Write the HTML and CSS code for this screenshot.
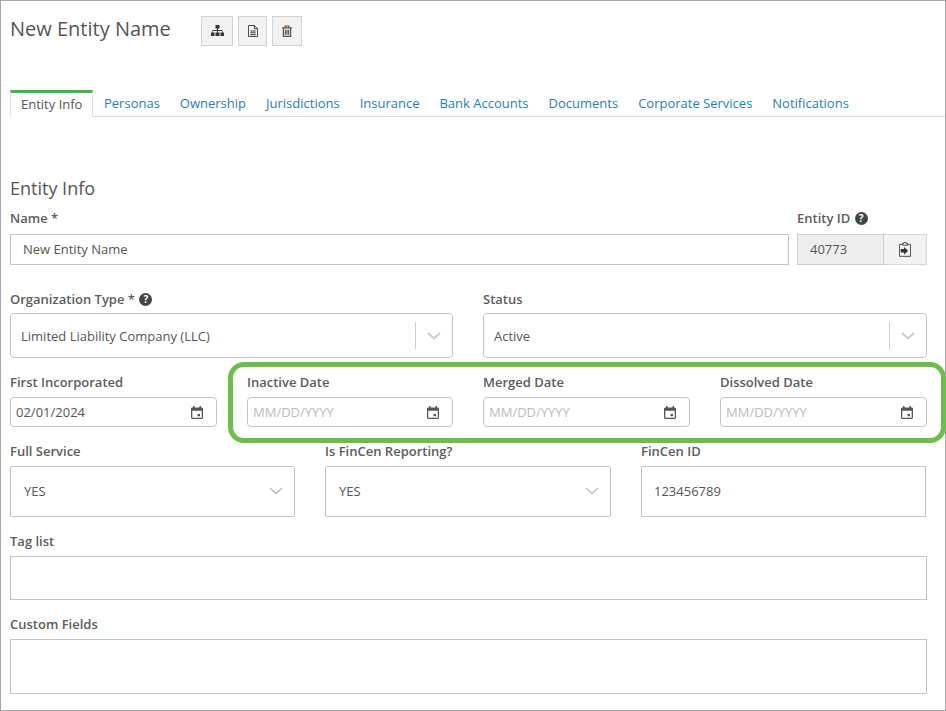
FILE: index.html
```html
<!DOCTYPE html>
<html lang="en">
<head>
    <meta charset="UTF-8">
    <title>New Entity Name</title>
    <link rel="stylesheet" href="styles.css">
</head>
<body>
    <div class="page">
        <div class="header">
            <h1>New Entity Name</h1>
            <div class="actions">
                <button class="icon-btn icon-btn-first" type="button">
                    <svg width="13" height="12" viewBox="0 0 13 12"><path fill="#333" d="M4.500 0h4v3.500H7V5h4.500v2.500H13V11H9.500V7.500H11V6H7v1.500h1.500V11h-4V7.500H6V6H2v1.500h1.500V11H0V7.500h1.500V5H6V3.500H4.500z"/></svg>
                </button>
                <button class="icon-btn icon-btn-mid" type="button">
                    <svg width="10" height="12" viewBox="0 0 11 13"><path fill="none" stroke="#333" d="M.5.500h6.500l3.500 3.500v8.500H.5zM7 .5V4h3.500"/><path stroke="#333" d="M2.500 6.500h6M2.500 8.500h6M2.500 10.500h6"/></svg>
                </button>
                <button class="icon-btn" type="button">
                    <svg width="10" height="12" viewBox="0 0 11 13"><path fill="none" stroke="#5b5048" stroke-width="1.300" d="M0 3h11M3.500 3V1h4v2M1.500 3v9.500h8V3M3.700 5v5.500M5.500 5v5.500M7.300 5v5.500"/></svg>
                </button>
            </div>
        </div>

        <ul class="tabs">
            <li class="tab active">Entity Info</li>
            <li class="tab">Personas</li>
            <li class="tab">Ownership</li>
            <li class="tab">Jurisdictions</li>
            <li class="tab">Insurance</li>
            <li class="tab">Bank Accounts</li>
            <li class="tab">Documents</li>
            <li class="tab">Corporate Services</li>
            <li class="tab">Notifications</li>
        </ul>

        <h2>Entity Info</h2>

        <div class="row row-name">
            <div class="field">
                <label class="label-wide">Name *</label>
                <div class="input input-name">New Entity Name</div>
            </div>
            <div class="field">
                <label class="label-wide">Entity ID <span class="help">?</span></label>
                <div class="id-group">
                    <div class="id-value">40773</div>
                    <div class="id-btn">
                        <svg width="12" height="15" viewBox="0 0 14 17"><path fill="none" stroke="#333" d="M3.500 2.500H.5v14h13v-14h-3"/><path fill="none" stroke="#333" d="M4 3.500V1.500h1.500V.5h3v1H10v2z"/><path fill="#333" d="M2 8h4V5.500L10.500 10 6 14.500V12H2z"/></svg>
                    </div>
                </div>
            </div>
        </div>

        <div class="row row-two">
            <div class="field">
                <label class="label-tight">Organization Type * <span class="help">?</span></label>
                <div class="select-large">
                    <span class="select-text">Limited Liability Company (LLC)</span>
                    <span class="divider"></span>
                    <svg class="chevron" width="14" height="8" viewBox="0 0 14 8"><path fill="none" stroke="#ccc" stroke-width="2" d="M1 1l6 5.500L13 1"/></svg>
                </div>
            </div>
            <div class="field">
                <label class="label-tight">Status</label>
                <div class="select-large">
                    <span class="select-text">Active</span>
                    <span class="divider"></span>
                    <svg class="chevron" width="14" height="8" viewBox="0 0 14 8"><path fill="none" stroke="#ccc" stroke-width="2" d="M1 1l6 5.500L13 1"/></svg>
                </div>
            </div>
        </div>

        <div class="row row-four">
            <div class="field">
                <label>First Incorporated</label>
                <div class="date">
                    <span>02/01/2024</span>
                    <svg class="cal" width="12" height="13" viewBox="0 0 12 14" preserveAspectRatio="none"><path fill="#555" d="M2 0h1.500v1.500h5V0H10v1.500h.5A1.500 1.500 0 0 1 12 3v9.500a1.500 1.500 0 0 1-1.500 1.500h-9A1.500 1.500 0 0 1 0 12.500V3a1.500 1.500 0 0 1 1.500-1.500H2zM1.300 5v7.700h9.400V5zM6.500 8.500h2.500V11H6.500z"/></svg>
                </div>
            </div>
            <div class="field">
                <label>Inactive Date</label>
                <div class="date placeholder">
                    <span>MM/DD/YYYY</span>
                    <svg class="cal" width="12" height="13" viewBox="0 0 12 14" preserveAspectRatio="none"><path fill="#555" d="M2 0h1.500v1.500h5V0H10v1.500h.5A1.500 1.500 0 0 1 12 3v9.500a1.500 1.500 0 0 1-1.500 1.500h-9A1.500 1.500 0 0 1 0 12.500V3a1.500 1.500 0 0 1 1.500-1.500H2zM1.300 5v7.700h9.400V5zM6.500 8.500h2.500V11H6.500z"/></svg>
                </div>
            </div>
            <div class="field">
                <label>Merged Date</label>
                <div class="date placeholder">
                    <span>MM/DD/YYYY</span>
                    <svg class="cal" width="12" height="13" viewBox="0 0 12 14" preserveAspectRatio="none"><path fill="#555" d="M2 0h1.500v1.500h5V0H10v1.500h.5A1.500 1.500 0 0 1 12 3v9.500a1.500 1.500 0 0 1-1.500 1.500h-9A1.500 1.500 0 0 1 0 12.500V3a1.500 1.500 0 0 1 1.500-1.500H2zM1.300 5v7.700h9.400V5zM6.500 8.500h2.500V11H6.500z"/></svg>
                </div>
            </div>
            <div class="field">
                <label>Dissolved Date</label>
                <div class="date placeholder">
                    <span>MM/DD/YYYY</span>
                    <svg class="cal" width="12" height="13" viewBox="0 0 12 14" preserveAspectRatio="none"><path fill="#555" d="M2 0h1.500v1.500h5V0H10v1.500h.5A1.500 1.500 0 0 1 12 3v9.500a1.500 1.500 0 0 1-1.500 1.500h-9A1.500 1.500 0 0 1 0 12.500V3a1.500 1.500 0 0 1 1.500-1.500H2zM1.300 5v7.700h9.400V5zM6.500 8.500h2.500V11H6.500z"/></svg>
                </div>
            </div>
        </div>

        <div class="row row-three">
            <div class="field">
                <label>Full Service</label>
                <div class="select-plain">
                    <span>YES</span>
                    <svg class="chevron" width="14" height="8" viewBox="0 0 14 8"><path fill="none" stroke="#bbb" stroke-width="1.500" d="M1 1l6 5.500L13 1"/></svg>
                </div>
            </div>
            <div class="field">
                <label>Is FinCen Reporting?</label>
                <div class="select-plain">
                    <span>YES</span>
                    <svg class="chevron" width="14" height="8" viewBox="0 0 14 8"><path fill="none" stroke="#bbb" stroke-width="1.500" d="M1 1l6 5.500L13 1"/></svg>
                </div>
            </div>
            <div class="field">
                <label>FinCen ID</label>
                <div class="select-plain fincen">123456789</div>
            </div>
        </div>

        <div class="row">
            <div class="field">
                <label>Tag list</label>
                <div class="box box-tags"></div>
            </div>
        </div>

        <div class="row">
            <div class="field">
                <label>Custom Fields</label>
                <div class="box box-custom"></div>
            </div>
        </div>

        <div class="highlight"></div>
    </div>
</body>
</html>
```

FILE: styles.css
```css
* {
    box-sizing: border-box;
}
body {
    margin: 0;
    font-family: "Open Sans", sans-serif;
    font-size: 13px;
    color: #555;
    background: #fff;
}
.page {
    position: relative;
    width: 946px;
    height: 711px;
    padding: 14px 18px 0 9px;
    border: 1px solid #a6a6a6;
}
.header {
    display: flex;
    align-items: flex-start;
    height: 75px;
}
h1 {
    margin: 0;
    width: 191px;
    font-size: 20px;
    font-weight: 400;
    line-height: 27px;
    color: #555;
}
.actions {
    display: flex;
    gap: 5px;
    margin-top: 1px;
}
.icon-btn {
    display: flex;
    align-items: center;
    justify-content: center;
    width: 30px;
    height: 30px;
    padding: 0;
    background: #f2f2f2;
    border: 1px solid #d2d2d2;
}
.icon-btn-first {
    width: 32px;
}
.icon-btn-mid {
    width: 29px;
}
.tabs {
    display: flex;
    height: 27px;
    margin: 0 -18px 0 0;
    padding: 0;
    list-style: none;
    border-bottom: 1px solid #ddd;
}
.tab {
    padding: 0 10px;
    line-height: 27px;
    color: #1f7fb4;
}
.tab.active {
    height: 27px;
    width: 83px;
    margin-right: 1px;
    padding: 0 0 0 10px;
    color: #555;
    background: #fff;
    border-top: 3px solid #4cae4c;
    border-left: 1px solid #e4e4e4;
    border-right: 1px solid #ddd;
    line-height: 22px;
}
h2 {
    margin: 59px 0 8px;
    font-size: 18px;
    font-weight: 400;
    line-height: 24px;
    color: #555;
}
.row {
    display: grid;
    gap: 30px;
    margin-bottom: 14px;
}
.row-name {
    grid-template-columns: 779px 130px;
    gap: 8px;
    margin-bottom: 24px;
}
.row-two {
    grid-template-columns: 443px 444px;
}
.row-four {
    grid-template-columns: 207px 206px 207px 207px;
}
.row-three {
    grid-template-columns: 285px 286px 285px;
}
label {
    display: block;
    height: 20px;
    margin-bottom: 5px;
    font-weight: 600;
    line-height: 20px;
    color: #5c5c5c;
}
.label-wide {
    margin-bottom: 6px;
}
.label-tight {
    margin-bottom: 4px;
}
.help {
    display: inline-block;
    width: 13px;
    height: 13px;
    margin-left: 1px;
    border-radius: 50%;
    background: #444;
    color: #fff;
    font-size: 10px;
    font-weight: 700;
    line-height: 13px;
    text-align: center;
    vertical-align: 1px;
}
.input {
    height: 31px;
    padding-left: 12px;
    border: 1px solid #c4c4c4;
    line-height: 29px;
}
.id-group {
    display: flex;
    height: 31px;
}
.id-value {
    width: 87px;
    padding-left: 12px;
    background: #eee;
    border: 1px solid #ccc;
    line-height: 29px;
}
.id-btn {
    display: flex;
    align-items: center;
    justify-content: center;
    flex: 1;
    background: #f2f2f2;
    border: 1px solid #d6d6d6;
    border-left: 0;
}
.select-large {
    display: flex;
    align-items: center;
    height: 45px;
    padding: 0 11px 0 10px;
    border: 1px solid #c4c4c4;
    border-radius: 4px;
}
.select-text {
    flex: 1;
}
.divider {
    width: 1px;
    height: 27px;
    margin-right: 11px;
    background: #ccc;
}
.date {
    display: flex;
    align-items: center;
    justify-content: space-between;
    height: 30px;
    padding: 0 13px 0 5px;
    border: 1px solid #c4c4c4;
    border-radius: 4px;
}
.placeholder span {
    color: #bbb;
}
.select-plain {
    display: flex;
    align-items: center;
    justify-content: space-between;
    height: 51px;
    padding: 0 11px 2px 13px;
    border: 1px solid #c4c4c4;
    border-radius: 2px;
}
.fincen {
    padding-left: 12px;
    border-radius: 0;
}
.box {
    border: 1px solid #c4c4c4;
}
.box-tags {
    height: 44px;
}
.box-custom {
    height: 55px;
}
.highlight {
    position: absolute;
    left: 227px;
    top: 361px;
    width: 718px;
    height: 81px;
    border: 5px solid #6cbd4a;
    border-radius: 16px;
}
```
